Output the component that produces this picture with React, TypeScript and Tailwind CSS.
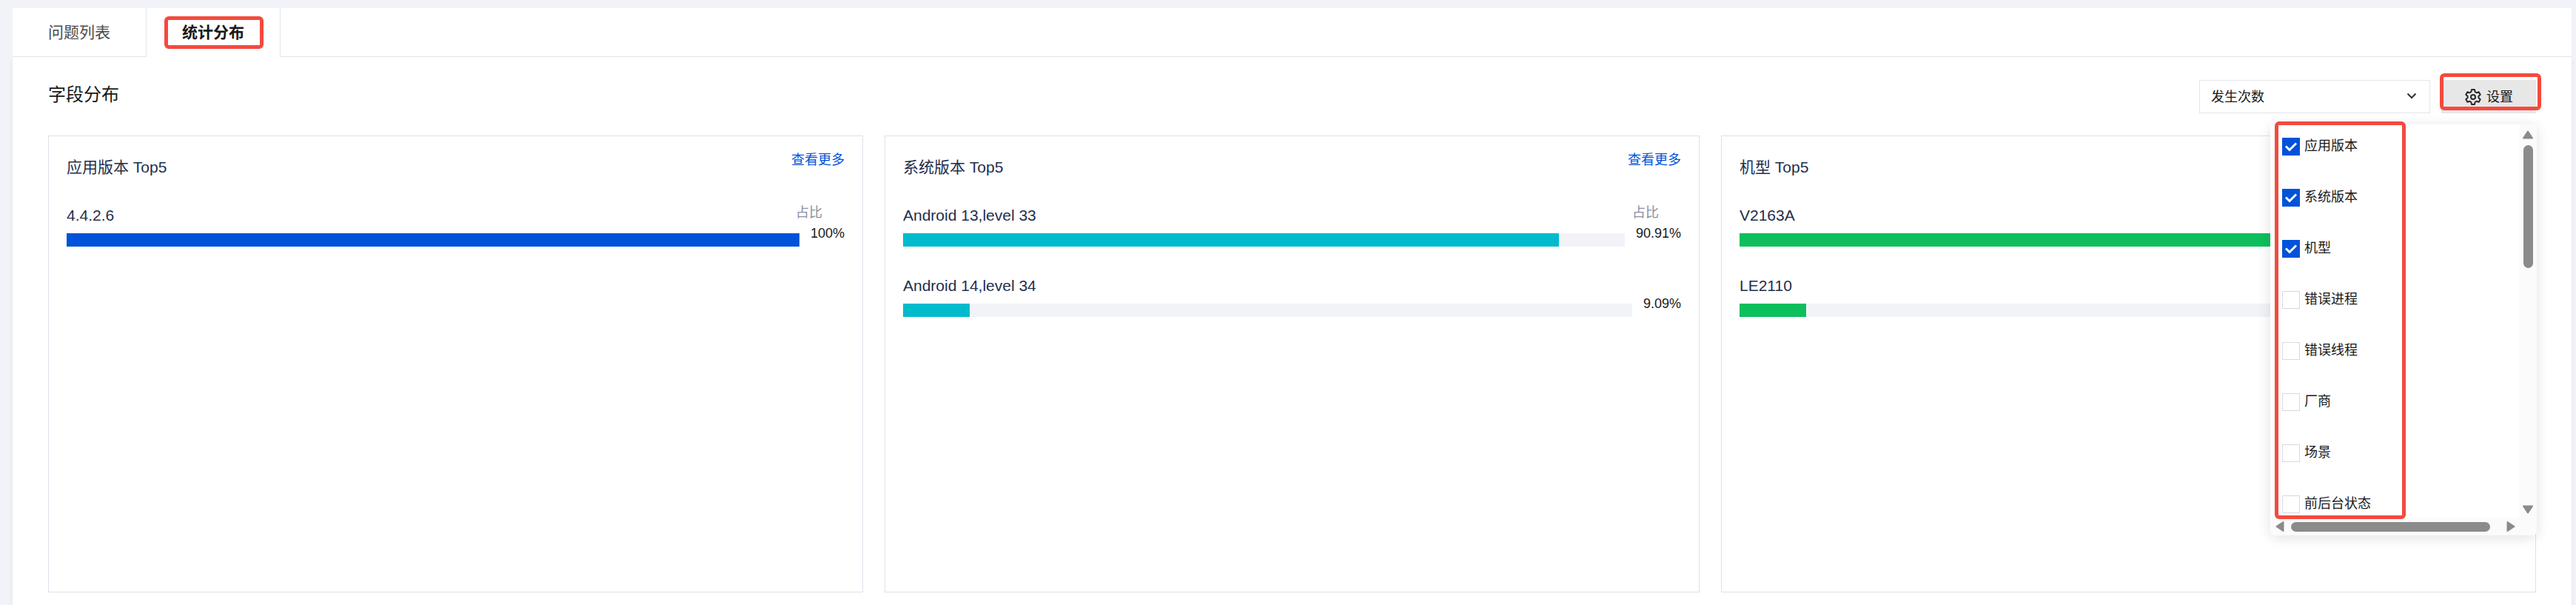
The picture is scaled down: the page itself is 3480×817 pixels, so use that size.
import React, { useState } from "react";

type Row = { name: string; percent: number };

type Distribution = {
  id: string;
  title: string;
  color: string;
  rows: Row[];
};

const distributions: Distribution[] = [
  {
    id: "app",
    title: "应用版本 Top5",
    color: "bg-[#0052d9]",
    rows: [{ name: "4.4.2.6", percent: 100 }],
  },
  {
    id: "system",
    title: "系统版本 Top5",
    color: "bg-[#00bbcc]",
    rows: [
      { name: "Android 13,level 33", percent: 90.91 },
      { name: "Android 14,level 34", percent: 9.09 },
    ],
  },
  {
    id: "model",
    title: "机型 Top5",
    color: "bg-[#0dbf5c]",
    rows: [
      { name: "V2163A", percent: 90.91 },
      { name: "LE2110", percent: 9.09 },
    ],
  },
];

const fields = [
  "应用版本",
  "系统版本",
  "机型",
  "错误进程",
  "错误线程",
  "厂商",
  "场景",
  "前后台状态",
];

// red frame laid over the parts the guide points at
const Highlight = ({ className }: { className: string }) => (
  <span
    aria-hidden="true"
    className={`pointer-events-none absolute rounded-md border-5 border-[#f44a3e] ${className}`}
  />
);

const GearIcon = () => (
  <svg
    className="h-6 w-6"
    viewBox="0 0 24 24"
    fill="none"
    stroke="#2a2a2a"
    strokeWidth="2"
    strokeLinejoin="round"
    aria-hidden="true"
  >
    <path d="M10 2h4l.6 3 2.2 1.3 2.9-1 2 3.4L19.4 11v2l2.3 2.3-2 3.4-2.9-1-2.2 1.3-.6 3h-4l-.6-3-2.200-1.300-2.900 1-2-3.400L4.600 13v-2L2.300 8.700l2-3.400 2.900 1L9.400 5z" />
    <circle cx="12" cy="12" r="3" />
  </svg>
);

const DistributionCard = ({ item }: { item: Distribution }) => (
  <section className="h-[617px] border border-[#dfe1eb] px-6 pt-5">
    <div className="flex items-start justify-between">
      <h3 className="pt-2 text-[21px] leading-7 text-[#1f2f4d]">{item.title}</h3>
      <a href="#more" className="text-lg leading-6 text-[#0052d9]">
        查看更多
      </a>
    </div>
    <ul className="mt-8 flex flex-col gap-8">
      {item.rows.map((row, i) => (
        <li key={row.name} className="h-[63px]">
          <div className="flex h-[31px] items-start justify-between">
            <span className="pt-[5px] text-[21px] leading-7 text-[#1f2f4d]">{row.name}</span>
            {i === 0 && (
              <span className="mr-[30px] pt-[3px] text-lg leading-6 text-[#8790a3]">占比</span>
            )}
          </div>
          <div className="flex items-start gap-[15px]">
            <div className="mt-3 h-[18px] flex-1 bg-[#f2f3f8]">
              <div className={`h-full ${item.color}`} style={{ width: `${row.percent}%` }} />
            </div>
            <span className="text-lg leading-6">{row.percent}%</span>
          </div>
        </li>
      ))}
    </ul>
  </section>
);

const Arrow = ({ className, d, box }: { className: string; d: string; box: string }) => (
  <svg
    className={className}
    viewBox={box}
    fill="#8b8b8b"
    stroke="#8b8b8b"
    strokeWidth="2"
    strokeLinejoin="round"
    aria-hidden="true"
  >
    <path d={d} />
  </svg>
);

const SettingsMenu = () => {
  const [checked, setChecked] = useState(fields.slice(0, 3));

  const toggle = (name: string) =>
    setChecked((prev) =>
      prev.includes(name) ? prev.filter((n) => n !== name) : [...prev, name]
    );

  return (
    <div className="absolute top-[60px] -right-px z-10 w-[360px] rounded-md bg-white shadow-[0_3px_18px_rgba(0,0,0,0.12)]">
      <div className="flex">
        <ul className="flex h-[531px] flex-1 flex-col gap-[45px] overflow-hidden pt-[18px] pl-4">
          {fields.map((name) => (
            <li key={name} className="h-6">
              <label className="flex items-start gap-1.5 text-lg leading-[22px]">
                <span className="relative h-6 w-6">
                  <input
                    type="checkbox"
                    checked={checked.includes(name)}
                    onChange={() => toggle(name)}
                    className="peer block h-6 w-6 appearance-none border border-[#d5d9e3] bg-white checked:border-[#0052d9] checked:bg-[#0052d9]"
                  />
                  <svg
                    className="pointer-events-none absolute inset-0 hidden h-6 w-6 peer-checked:block"
                    viewBox="0 0 24 24"
                    fill="none"
                    stroke="#fff"
                    strokeWidth="3"
                    aria-hidden="true"
                  >
                    <path d="M5 11.500l5 5 9-9" />
                  </svg>
                </span>
                {name}
              </label>
            </li>
          ))}
        </ul>
        <div className="flex w-6 flex-col items-center rounded-tr-md bg-[#fbfbfb] pt-2 pb-[5px]">
          <Arrow className="h-3 w-4" d="M8 1.500L14 10.500H2z" box="0 0 16 12" />
          <div className="mt-2 h-[166px] w-[13px] rounded-full bg-[#8b8b8b]" />
          <Arrow className="mt-auto h-3 w-4" d="M8 10.500L14 1.500H2z" box="0 0 16 12" />
        </div>
      </div>
      <div className="flex h-6 items-center rounded-b-md bg-[#fbfbfb] pr-[29px] pl-[7px]">
        <Arrow className="h-4 w-3" d="M1.500 8L10.500 2V14z" box="0 0 12 16" />
        <div className="ml-[9px] h-[13px] w-[269px] rounded-full bg-[#8b8b8b]" />
        <Arrow className="ml-auto h-4 w-3" d="M10.500 8L1.500 2V14z" box="0 0 12 16" />
      </div>
      <Highlight className="-top-1 left-1.5 h-[537px] w-[177px]" />
    </div>
  );
};

const App = () => {
  return (
    <div className="flex min-h-screen flex-col bg-[#f2f3f8] pt-[11px] pr-1.5 pl-[17px] font-['Liberation_Sans','Noto_Sans_CJK_SC',sans-serif] text-[#181818]">
      <nav className="flex h-[66px] bg-white text-[21px]">
        <button className="border-r border-b border-[#e3e5ee] px-12 text-[#4b4b4b]">
          问题列表
        </button>
        <button className="relative border-r border-[#e3e5ee] px-12 font-bold">
          统计分布
          <Highlight className="top-[11px] left-6 h-11 w-[134px]" />
        </button>
        <div className="flex-1 border-b border-[#e3e5ee]" />
      </nav>

      <main className="flex-1 bg-white px-12 pb-4 shadow-[0_3px_6px_rgba(30,40,90,0.08)]">
        <header className="flex items-start justify-between pt-[31px]">
          <h2 className="text-2xl leading-10">字段分布</h2>
          <div className="relative flex gap-[15px]">
            <div className="relative">
              <select
                aria-label="统计指标"
                className="block h-[45px] w-[312px] appearance-none border border-[#e3e5ee] bg-white px-[15px] text-lg"
              >
                <option>发生次数</option>
              </select>
              <svg
                className="pointer-events-none absolute top-[14px] right-[17px] h-4 w-4"
                viewBox="0 0 16 16"
                fill="none"
                stroke="#333"
                strokeWidth="2"
                aria-hidden="true"
              >
                <path d="M2.500 4.500L8 10l5.500-5.500" />
              </svg>
            </div>
            <button className="relative flex h-[45px] w-32 items-center justify-center gap-1.5 bg-[#e7e7e8] text-lg">
              <GearIcon />
              设置
              <Highlight className="-top-[9px] -left-0.5 h-[50px] w-[137px]" />
            </button>
            <SettingsMenu />
          </div>
        </header>

        <div className="mt-[30px] grid grid-cols-3 gap-[29px]">
          {distributions.map((item) => (
            <DistributionCard key={item.id} item={item} />
          ))}
        </div>
      </main>
    </div>
  );
};

export default App;
